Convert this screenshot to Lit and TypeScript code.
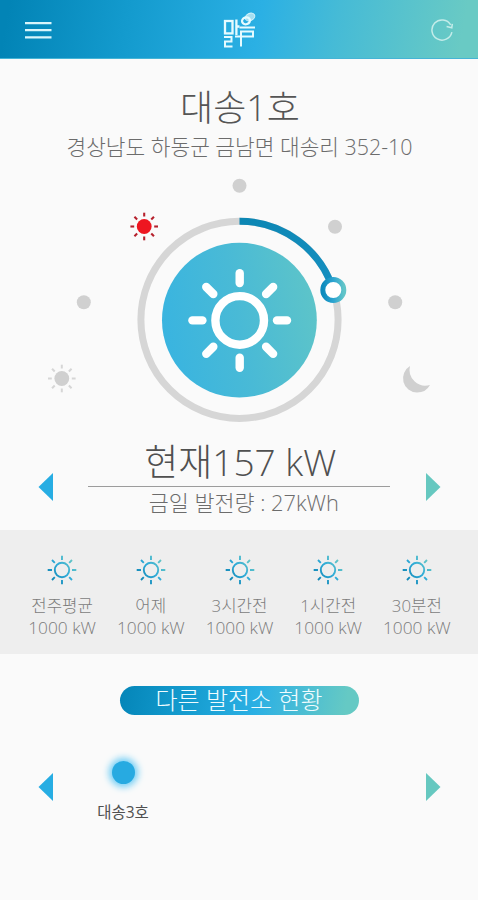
import { LitElement, html, css, svg } from "lit";
import { customElement, property } from "lit/decorators.js";

const ANGLES = [0, 45, 90, 135, 180, 225, 270, 315];

const rays = (from: number, to: number) =>
  ANGLES.map((a) => svg`<line x1="0" y1=${-from} x2="0" y2=${-to} transform=${`rotate(${a})`} />`);

@customElement("nav-arrow")
class NavArrow extends LitElement {
  @property() dir = "left";
  static styles = css`
    :host { display: block; width: 15px; height: 28px; }
    svg { display: block; }
    .left { fill: #27ade3; }
    .right { fill: #66c8c0; }
  `;
  render() {
    return html`<svg width="15" height="28" viewBox="0 0 15 28">
      ${this.dir === "left"
        ? svg`<path class="left" d="M15 0V28L.5 14z" />`
        : svg`<path class="right" d="M0 0V28L14.5 14z" />`}
    </svg>`;
  }
}

@customElement("power-dial")
class PowerDial extends LitElement {
  static styles = css`
    :host { display: block; height: 260px; }
    svg { display: block; }
    .dot, .moon { fill: #d0d0d0; }
    .track { fill: none; stroke: #d6d6d6; stroke-width: 7; }
    .progress { fill: none; stroke: url(#arc); stroke-width: 7; }
    .knob { fill: #fff; stroke: url(#knob); stroke-width: 5; }
    .big { fill: none; stroke: #fff; stroke-width: 8.4; stroke-linecap: round; }
    .hot { fill: #ee1620; stroke: #b5202c; stroke-width: 2.1; }
    .dim { fill: #d0d0d0; stroke: #d6d6d6; stroke-width: 2; }
    .core { stroke: none; }
  `;
  render() {
    const dots = [[239.5, 185.7], [335, 226.8], [395.2, 302.3], [83.8, 302.3]];
    return html`<svg width="478" height="260" viewBox="0 170 478 260">
      <defs>
        <linearGradient id="disc" x1="0" y1=".6" x2="1" y2=".4">
          <stop offset="0" stop-color="#39b4e0" />
          <stop offset=".5" stop-color="#49bad6" />
          <stop offset="1" stop-color="#5dc4c9" />
        </linearGradient>
        <linearGradient id="arc" gradientUnits="userSpaceOnUse" x1="240" y1="220" x2="334" y2="290">
          <stop offset="0" stop-color="#0c86b3" />
          <stop offset="1" stop-color="#158fc0" />
        </linearGradient>
        <linearGradient id="knob">
          <stop offset="0" stop-color="#0d8bbd" />
          <stop offset=".5" stop-color="#2ca4d0" />
          <stop offset="1" stop-color="#62c5c8" />
        </linearGradient>
      </defs>
      ${dots.map(([x, y]) => svg`<circle class="dot" cx=${x} cy=${y} r="7" />`)}
      <g class="hot" transform="translate(144.2 226.5)"><circle class="core" r="7.4" />${rays(10, 13.8)}</g>
      <g class="dim" transform="translate(61.8 378.5)"><circle class="core" r="7.4" />${rays(10, 13.8)}</g>
      <path class="moon" d="M410 366A14.3 14.3 0 0 0 417 392.6Q426 392.5 430 385A15.9 15.9 0 0 1 410 366z" />
      <circle class="track" cx="239.5" cy="319.8" r="98.6" />
      <path class="progress" d="M239.5 221.2A98.6 98.6 0 0 1 333.4 290" />
      <circle class="knob" cx="333.3" cy="290" r="10.5" />
      <circle cx="239.4" cy="320.2" r="77.4" fill="url(#disc)" />
      <g class="big" transform="translate(239.7 320.4)"><circle r="24.3" />${rays(37.3, 47.3)}</g>
    </svg>`;
  }
}

@customElement("history-item")
class HistoryItem extends LitElement {
  @property() label = "";
  @property() value = "";
  static styles = css`
    :host { display: flex; flex-direction: column; align-items: center; width: 88.7px; white-space: nowrap; }
    svg { display: block; margin-bottom: 10px; }
    .sun { fill: none; stroke: url(#g); stroke-width: 1.9; }
    .label, .value { height: 22px; line-height: 22px; font-weight: 300; color: #7c7c7c; }
    .label { font-size: 16.8px; }
    .value { font-size: 17.3px; }
  `;
  render() {
    return html`<svg width="30" height="30" viewBox="-15 -15 30 30">
        <defs>
          <linearGradient id="g" gradientUnits="userSpaceOnUse" x1="-11" y1="9" x2="12" y2="-10">
            <stop offset="0" stop-color="#1186b4" />
            <stop offset=".5" stop-color="#2fabd8" />
            <stop offset="1" stop-color="#68c8c4" />
          </linearGradient>
        </defs>
        <g class="sun"><circle r="7.2" />
          <path d="M-.01-10L.01-14.3M-.01 10L.01 14.3M-10-.01L-14.3.01M10-.01L14.3.01M-7.2-7.2L-10-10M7.2 7.2L10 10M-7.2 7.2L-10 10M7.2-7.2L10-10" />
        </g>
      </svg>
      <div class="label">${this.label}</div>
      <div class="value">${this.value}</div>`;
  }
}

@customElement("app-root")
class AppRoot extends LitElement {
  static styles = css`
    :host {
      display: flex; flex-direction: column; width: 478px; height: 900px; overflow: hidden;
      background: #fafafa; color: #666; font-weight: 300;
      font-family: "Open Sans", "Noto Sans CJK KR", sans-serif;
    }
    header {
      height: 59px; box-sizing: border-box; padding: 0 24px 0 25px;
      display: grid; grid-template-columns: 1fr auto 1fr; align-items: center;
      background: linear-gradient(100deg, #0284b6 2%, #139acd 26%, #2bb0e4 54%, #46bbd6 70%, #69cac4 96%);
      border-bottom: 1px solid #45b4d6;
    }
    header svg { display: block; fill: none; }
    .menu { stroke: #d9f5fb; stroke-width: 2.2; }
    .logo { stroke: #e6fbff; stroke-width: 2.3; }
    .leaf { fill: #a5def0; stroke: #d5f4fb; stroke-width: 1; }
    .thin { stroke-width: 2; }
    .refresh { justify-self: end; stroke: #c4ece9; stroke-width: 1.5; position: relative; top: 1px; }
    .menu, .logo { position: relative; top: 0.7px; }
    .heading { padding-top: 26px; height: 85px; text-align: center; white-space: nowrap; }
    .name { font-size: 36px; line-height: 46px; height: 45px; color: #555; padding-left: 2px; }
    .addr { font-size: 21.4px; line-height: 33px; height: 34px; color: #6c6c6c; padding-left: 1px; }
    .current { height: 100px; display: flex; justify-content: space-between; padding: 0 37.5px 0 38px; }
    .current nav-arrow { margin-top: 43px; }
    .reading { width: 302px; text-align: center; white-space: nowrap; }
    .now { height: 56px; line-height: 64px; font-size: 37px; color: #505050; border-bottom: 1.5px solid #9c9c9c; padding-left: 2px; }
    .today { height: 32px; line-height: 32px; font-size: 21.8px; color: #6c6c6c; padding-left: 9px; }
    .strip {
      height: 124px; background: #eee; box-sizing: border-box; padding: 25px 0 0 1px;
      display: flex; justify-content: center;
    }
    .pill {
      align-self: center; margin-top: 32px; width: 239px; height: 29px; line-height: 27px;
      border-radius: 15px; color: #f0fcff; font-size: 24px; text-align: center; white-space: nowrap; font-weight: 300;
      background: linear-gradient(100deg, #0485b8, #139acd 26%, #2bb0e4 57%, #46bbd6 73%, #65c9c4 94%);
    }
    .others { display: flex; padding: 37px 37.5px 0 38px; }
    .others nav-arrow { margin-top: 21px; }
    .plant { width: 72px; margin-left: 34px; flex: none; display: flex; flex-direction: column; align-items: center; }
    .glow { width: 23px; height: 23px; margin-top: 9px; border-radius: 50%; background: #27aae1; box-shadow: 0 0 7px 3px #6fcdf5; }
    .plantname { margin-top: 17px; font-size: 15.5px; line-height: 22px; color: #505050; font-weight: 400; white-space: nowrap; }
    .push { margin-left: auto; }
  `;
  render() {
    const history = ["전주평균", "어제", "3시간전", "1시간전", "30분전"];
    return html`
      <header>
        <svg class="menu" width="27" height="18" viewBox="0 0 27 18"><path d="M0 2.2H26.5M0 9.2H26.5M0 16.4H26.5" /></svg>
        <svg class="logo" width="34" height="38" viewBox="223 11 34 38">
          <ellipse class="leaf" cx="250" cy="17" rx="5" ry="3.6" transform="rotate(-25 250 17)" />
          <rect x="225" y="21" width="7.5" height="12.4" />
          <path d="M236.4 19.5V35M236.4 26.5H239.5" />
          <path class="thin" d="M224 37H231.5V41.5H225V46.5H232.5" />
          <ellipse cx="246" cy="20.8" rx="4" ry="3.4" transform="rotate(-20 246 20.8)" />
          <path class="thin" d="M239.5 27.6H255M235 36.6H253V31.5H241V46.5" />
        </svg>
        <svg class="refresh" width="24" height="24" viewBox="-12 -12 24 24">
          <path d="M9.9 2.2A10.1 10.1 0 1 1 8.7-5.2" /><path d="M4.6-3.6L9.8-2.3L10.3-6.2" />
        </svg>
      </header>
      <div class="heading">
        <div class="name">대송1호</div>
        <div class="addr">경상남도 하동군 금남면 대송리 352-10</div>
      </div>
      <power-dial></power-dial>
      <div class="current">
        <nav-arrow dir="left"></nav-arrow>
        <div class="reading">
          <div class="now">현재157 kW</div>
          <div class="today">금일 발전량 : 27kWh</div>
        </div>
        <nav-arrow dir="right"></nav-arrow>
      </div>
      <div class="strip">
        ${history.map((h) => html`<history-item label=${h} value="1000 kW"></history-item>`)}
      </div>
      <div class="pill">다른 발전소 현황</div>
      <div class="others">
        <nav-arrow dir="left"></nav-arrow>
        <div class="plant"><div class="glow"></div><div class="plantname">대송3호</div></div>
        <nav-arrow class="push" dir="right"></nav-arrow>
      </div>
    `;
  }
}
